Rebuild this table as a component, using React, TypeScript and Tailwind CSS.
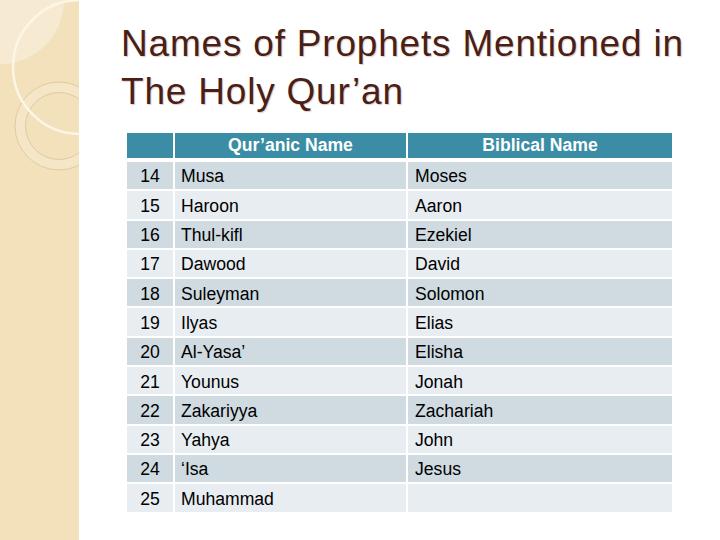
import React from "react";

// Prophets listed on this slide: [number, Qur'anic name, Biblical name]
const ROWS: [string, string, string][] = [
  ["14", "Musa", "Moses"],
  ["15", "Haroon", "Aaron"],
  ["16", "Thul-kifl", "Ezekiel"],
  ["17", "Dawood", "David"],
  ["18", "Suleyman", "Solomon"],
  ["19", "Ilyas", "Elias"],
  ["20", "Al-Yasa’", "Elisha"],
  ["21", "Younus", "Jonah"],
  ["22", "Zakariyya", "Zachariah"],
  ["23", "Yahya", "John"],
  ["24", "‘Isa", "Jesus"],
  ["25", "Muhammad", ""],
];

function SideStrip() {
  return (
    <div className="relative w-[79px] shrink-0 h-full overflow-hidden bg-[#f2e1ba]">
      <svg width="79" height="540" viewBox="0 0 79 540" className="block">
        <circle cx="0" cy="0" r="64" fill="#f6ebd2" />
        <circle cx="59" cy="126" r="44" fill="#f4e6c6" stroke="#d8c496" strokeWidth="0.8" />
        <circle cx="59" cy="126" r="33.5" fill="#f2e1ba" stroke="#d8c496" strokeWidth="0.8" />
        <circle cx="80" cy="67" r="67" fill="none" stroke="#fcf6e6" strokeWidth="2.5" />
      </svg>
    </div>
  );
}

export default function App() {
  return (
    <div className="flex w-[720px] h-[540px] bg-white font-['Liberation_Sans',Arial,sans-serif] overflow-hidden">
      <SideStrip />

      <div className="flex flex-col pl-[42px] pt-[20px]">
        <h1 className="text-[37px] leading-[48px] tracking-[0.8px] font-normal text-[#4a1f17] [text-shadow:1px_1px_1px_rgba(160,110,100,0.35)] whitespace-nowrap">
          Names of Prophets Mentioned in
          <br />
          The Holy Qur’an
        </h1>

        <div className="ml-[6px] mt-[17px] w-[545px] flex flex-col text-[17.6px] text-black">
          {/* header */}
          <div className="flex gap-[2px] h-[25px] mb-[4px]">
            <div className="w-[46px] bg-[#3a8da4]" />
            <div className="w-[231px] bg-[#3a8da4] flex items-center justify-center font-bold text-white">
              Qur’anic Name
            </div>
            <div className="flex-1 bg-[#3a8da4] flex items-center justify-center font-bold text-white">
              Biblical Name
            </div>
          </div>

          <div className="flex flex-col gap-[2px]">
            {ROWS.map(([num, quranic, biblical], i) => {
              const bg = i % 2 === 0 ? "bg-[#cfdbe1]" : "bg-[#e8edf1]";
              return (
                <div key={num} className="flex gap-[2px] h-[27.3px]">
                  <div className={`w-[46px] ${bg} flex items-center justify-center pt-[2px]`}>{num}</div>
                  <div className={`w-[231px] ${bg} flex items-center pl-[6px] pt-[2px]`}>{quranic}</div>
                  <div className={`flex-1 ${bg} flex items-center pl-[7px] pt-[2px]`}>{biblical}</div>
                </div>
              );
            })}
          </div>
        </div>
      </div>
    </div>
  );
}
